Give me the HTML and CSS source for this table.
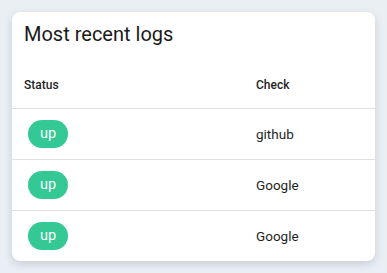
FILE: index.html
```html
<!DOCTYPE html>
<html lang="en">
<head>
    <meta charset="UTF-8">
    <title>Most recent logs</title>
    <link rel="stylesheet" href="styles.css">
</head>
<body>

    <div class="card">
        <h2 class="card-title">Most recent logs</h2>

        <div class="log-table">
            <div class="log-row log-head">
                <div class="cell">Status</div>
                <div class="cell">Check</div>
            </div>
            <div class="log-row">
                <div class="cell"><span class="badge">up</span></div>
                <div class="cell">github</div>
            </div>
            <div class="log-row">
                <div class="cell"><span class="badge">up</span></div>
                <div class="cell">Google</div>
            </div>
            <div class="log-row">
                <div class="cell"><span class="badge">up</span></div>
                <div class="cell">Google</div>
            </div>
        </div>
    </div>

</body>
</html>
```

FILE: styles.css
```css
body {
    margin: 0;
    padding: 12px;
    background: #eaeff4;
    font-family: Roboto, 'Liberation Sans', sans-serif;
    color: #1f1f1f;
}

.card {
    background: #fff;
    border-radius: 8px;
    box-shadow: 0 3px 8px rgba(40, 50, 70, 0.18);
    overflow: hidden;
}

.card-title {
    margin: 0;
    padding: 10px 12px 0;
    font-size: 20px;
    font-weight: 400;
    line-height: 24px;
    color: #1a1a1a;
}

.log-row {
    display: grid;
    grid-template-columns: 232px 1fr;
    align-items: center;
    height: 50px;
    border-top: 1px solid #e0e0e0;
    font-size: 13.5px;
}

.log-head {
    height: 46px;
    margin-top: 16px;
    border-top: none;
    font-size: 12px;
    font-weight: 500;
}

.cell {
    padding: 0 12px;
}

.badge {
    display: inline-block;
    margin-left: 4px;
    padding: 0 12px;
    height: 28px;
    line-height: 28px;
    border-radius: 14px;
    background: #34c894;
    color: #fff;
    font-size: 14.5px;
}
```
